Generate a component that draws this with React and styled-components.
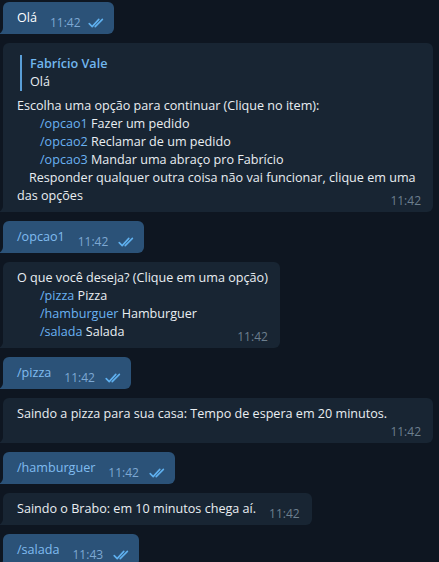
import React from "react";
import styled, { createGlobalStyle } from "styled-components";

const Global = createGlobalStyle`
  html, body { margin: 0; padding: 0; background: #0e1621; }
  #root { width: 439px; height: 562px; }
`;

const Page = styled.div`
  box-sizing: border-box;
  width: 439px;
  height: 562px;
  overflow: hidden;
  background: #0e1621;
  display: flex;
  flex-direction: column;
  align-items: flex-start;
  gap: 9px;
  padding: 2px 0 0 3px;
  font-family: "Open Sans", "Noto Sans", sans-serif;
  -webkit-font-smoothing: antialiased;
`;

const Bubble = styled.div`
  position: relative;
  box-sizing: border-box;
  flex: none;
  width: ${(p) => (p.$wide ? "430px" : "auto")};
  background: ${(p) => (p.$out ? "#2b5278" : "#182533")};
  color: ${(p) => (p.$out ? "#ffffff" : "#e9eef2")};
  border-radius: 6px 6px 6px 0;
  padding: 7px ${(p) => (p.$out ? "10px" : "12px")} 2px 14px;
  font-size: 12.6px;
  line-height: 18px;

  &::before {
    content: "";
    position: absolute;
    left: -6px;
    bottom: 0;
    width: 6px;
    height: 8px;
    background: ${(p) => (p.$out ? "#2b5278" : "#182533")};
  }
  &::after {
    content: "";
    position: absolute;
    left: -6px;
    bottom: 0;
    width: 6px;
    height: 8px;
    background: #0e1621;
    border-bottom-right-radius: 6px;
  }
`;

const Line = styled.div`
  padding-left: ${(p) => p.$indent || 0}px;
  white-space: nowrap;
`;

const LastRow = styled.div`
  display: flex;
  align-items: flex-end;
  justify-content: space-between;
  gap: 13px;
`;

const LastText = styled.div`
  margin-bottom: 5px;
  padding-left: ${(p) => p.$indent || 0}px;
  white-space: nowrap;
`;

const MetaRow = styled.div`
  display: flex;
  justify-content: flex-end;
`;

const Meta = styled.div`
  display: flex;
  align-items: center;
  gap: ${(p) => p.$gap || 8}px;
  flex: none;
  font-size: 12px;
  line-height: 18px;
  color: ${(p) => (p.$out ? "#7da8d3" : "#6d7f8e")};
`;

const Cmd = styled.span`
  color: ${(p) => (p.$out ? "#80bcf0" : "#6ab2f2")};
`;

const Quote = styled.div`
  margin: 5px 0 6px 3px;
  padding-left: 8px;
  border-left: 2px solid #5a9fd8;
`;

const QuoteName = styled.div`
  color: #71b6ee;
  font-weight: 600;
`;

const Checks = ({ size = 16 }) => (
  <svg width={size} height="10" viewBox="0 0 16 10" fill="none">
    <path
      d="M1.2 5.6 L4.2 8.6 L10.8 1.4"
      stroke="#5fb0ef"
      strokeWidth="1.6"
      strokeLinecap="round"
      strokeLinejoin="round"
    />
    <path
      d="M7.2 8.6 L14.4 1.4"
      stroke="#5fb0ef"
      strokeWidth="1.6"
      strokeLinecap="round"
    />
  </svg>
);

const OutMsg = ({ children, time, gap }) => (
  <Bubble $out>
    <LastRow>
      <LastText>{children}</LastText>
      <Meta $out $gap={gap}>
        <span>{time}</span>
        <Checks />
      </Meta>
    </LastRow>
  </Bubble>
);

export default function App() {
  return (
    <>
      <Global />
      <Page>
        <OutMsg time="11:42" gap={7}>Olá</OutMsg>

        <Bubble $wide>
          <Quote>
            <QuoteName>Fabrício Vale</QuoteName>
            <div>Olá</div>
          </Quote>
          <Line>Escolha uma opção para continuar (Clique no item):</Line>
          <Line $indent={23}>
            <Cmd>/opcao1</Cmd> Fazer um pedido
          </Line>
          <Line $indent={23}>
            <Cmd>/opcao2</Cmd> Reclamar de um pedido
          </Line>
          <Line $indent={23}>
            <Cmd>/opcao3</Cmd> Mandar uma abraço pro Fabrício
          </Line>
          <Line $indent={12}>
            Responder qualquer outra coisa não vai funcionar, clique em uma
          </Line>
          <LastRow>
            <LastText>das opções</LastText>
            <Meta>11:42</Meta>
          </LastRow>
        </Bubble>

        <OutMsg time="11:42" gap={10}>
          <Cmd $out>/opcao1</Cmd>
        </OutMsg>

        <Bubble>
          <Line>O que você deseja? (Clique em uma opção)</Line>
          <Line $indent={23}>
            <Cmd>/pizza</Cmd> Pizza
          </Line>
          <Line $indent={23}>
            <Cmd>/hamburguer</Cmd> Hamburguer
          </Line>
          <LastRow>
            <LastText $indent={23}>
              <Cmd>/salada</Cmd> Salada
            </LastText>
            <Meta>11:42</Meta>
          </LastRow>
        </Bubble>

        <OutMsg time="11:42" gap={10}>
          <Cmd $out>/pizza</Cmd>
        </OutMsg>

        <Bubble $wide>
          <Line>Saindo a pizza para sua casa: Tempo de espera em 20 minutos.</Line>
          <MetaRow>
            <Meta>11:42</Meta>
          </MetaRow>
        </Bubble>

        <OutMsg time="11:42" gap={10}>
          <Cmd $out>/hamburguer</Cmd>
        </OutMsg>

        <Bubble>
          <LastRow>
            <LastText>Saindo o Brabo: em 10 minutos chega aí.</LastText>
            <Meta>11:42</Meta>
          </LastRow>
        </Bubble>

        <OutMsg time="11:43" gap={10}>
          <Cmd $out>/salada</Cmd>
        </OutMsg>
      </Page>
    </>
  );
}
